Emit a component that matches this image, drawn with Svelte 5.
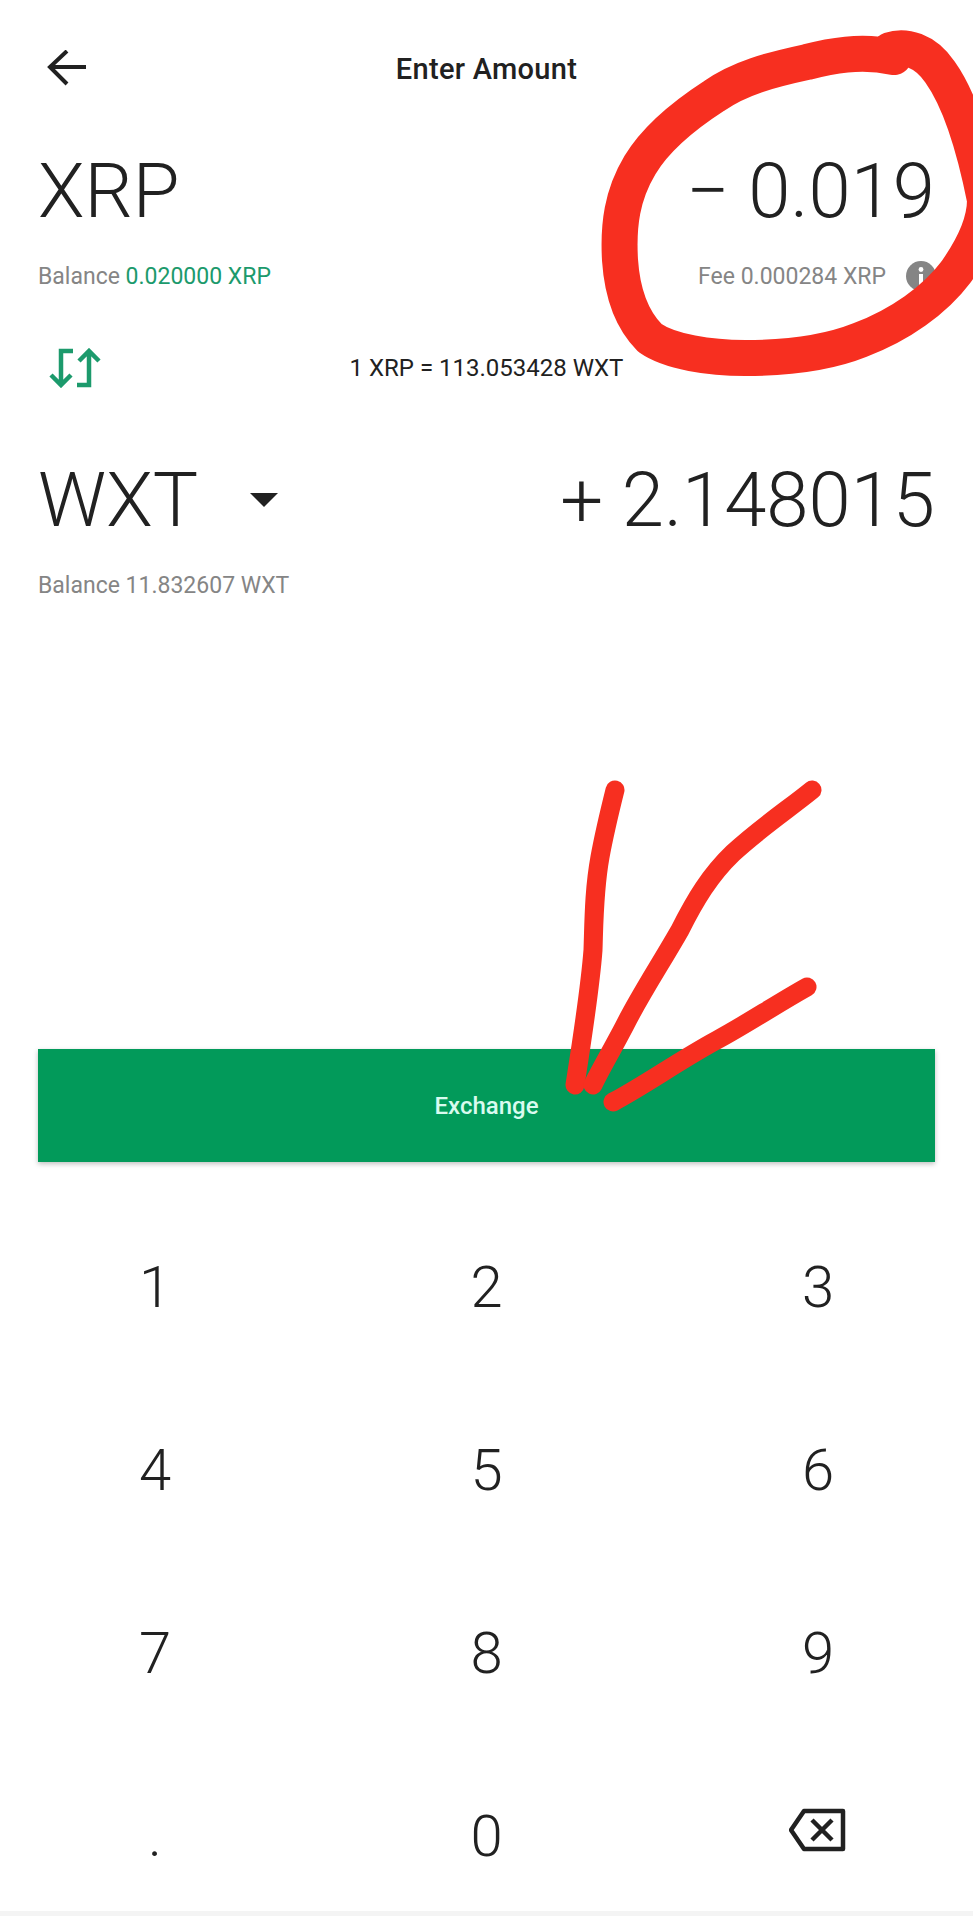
<script>
    let keys = ['1', '2', '3', '4', '5', '6', '7', '8', '9', '.', '0']
</script>

<main>
    <header>
        <svg class="back" viewBox="0 0 40 36" width="40" height="36">
            <path d="M39 17H3M20 1L3 17l17 17" fill="none" stroke="#212121" stroke-width="4"/>
        </svg>
        <h1>Enter Amount</h1>
    </header>

    <div class="amount-row">
        <span>XRP</span>
        <span>− 0.019</span>
    </div>
    <div class="sub-row">
        <span>Balance <em>0.020000 XRP</em></span>
        <span class="fee">
            Fee 0.000284 XRP
            <svg viewBox="0 0 30 30" width="30" height="30">
                <circle cx="15" cy="15" r="15" fill="#858585"/>
                <rect x="13" y="13" width="4" height="11" fill="#fff"/>
                <circle cx="15" cy="8.5" r="2.4" fill="#fff"/>
            </svg>
        </span>
    </div>

    <div class="rate-row">
        <svg class="swap" viewBox="0 0 52 40" width="52" height="40">
            <g fill="none" stroke="#1c9a6c" stroke-width="4.5">
                <path d="M24 3H12v34M2 27l10 10 10-10"/>
                <path d="M28 37h12V3M30 13L40 3l10 10"/>
            </g>
        </svg>
        <span class="rate">1 XRP = 113.053428 WXT</span>
    </div>

    <div class="amount-row second">
        <span class="coin">
            WXT
            <svg viewBox="0 0 28 14" width="28" height="14"><path d="M0 0h28L14 14z" fill="#212121"/></svg>
        </span>
        <span>+ 2.148015</span>
    </div>
    <div class="sub-row grey">
        <span>Balance 11.832607 WXT</span>
    </div>

    <button class="exchange">Exchange</button>

    <div class="keypad">
        {#each keys as key}
            <button class="key">{key}</button>
        {/each}
        <button class="key" aria-label="delete">
            <svg viewBox="0 0 58 44" width="58" height="44">
                <g fill="none" stroke="#212121" stroke-width="4.5" stroke-linejoin="round">
                    <path d="M15 3h39v38H15L2 22z"/>
                    <path d="M23 12l20 20M43 12L23 32"/>
                </g>
            </svg>
        </button>
    </div>
    <div class="bottom-line"></div>

    <!-- red marker scribbles drawn on top of the screenshot -->
    <svg class="scribble" viewBox="0 0 973 1920" width="973" height="1920">
        <g fill="none" stroke="#f72f20" stroke-linecap="round" stroke-linejoin="round">
            <path stroke-width="36" d="M894 57C860 50 830 56 807 62C770 70 740 78 714 96C680 118 655 140 640 165C622 195 618 225 620 260C622 290 630 318 650 338C670 352 710 358 745 358C790 358 830 352 860 340C900 325 935 300 956 272C975 245 985 220 985 200C975 150 960 100 940 72C925 50 905 45 890 50"/>
            <path stroke-width="19" d="M615 790C610 810 604 835 600 857C594 890 594 920 593 950C590 990 582 1040 575 1085"/>
            <path stroke-width="19" d="M812 790C790 808 760 828 733 853C710 875 695 900 680 930C660 965 640 995 625 1025C612 1050 600 1070 593 1085"/>
            <path stroke-width="19" d="M807 987C775 1005 745 1025 717 1040C680 1060 645 1085 613 1102"/>
        </g>
    </svg>
</main>

<style>
    :global(body) {
        margin: 0;
        background: #fff;
    }

    main {
        position: relative;
        width: 973px;
        height: 1920px;
        overflow: hidden;
        font-family: Roboto, "Open Sans", sans-serif;
        color: #212121;
    }

    header {
        height: 138px;
        display: flex;
        align-items: center;
        justify-content: center;
        position: relative;
    }

    .back {
        position: absolute;
        left: 47px;
        top: 50px;
    }

    h1 {
        margin: 0;
        font-size: 29px;
        font-weight: 500;
        letter-spacing: 0.3px;
    }

    .amount-row {
        height: 106px;
        padding: 0 38px;
        display: flex;
        align-items: center;
        justify-content: space-between;
        font-size: 76px;
        font-weight: 300;
    }

    .second {
        margin-top: 19px;
    }

    .coin {
        display: flex;
        align-items: center;
        gap: 52px;
    }

    .sub-row {
        height: 64px;
        padding: 0 38px;
        display: flex;
        align-items: center;
        justify-content: space-between;
        font-size: 23px;
        color: #858585;
    }

    em {
        font-style: normal;
        color: #1c9a6c;
    }

    .fee {
        display: flex;
        align-items: center;
        gap: 20px;
        margin-right: -1px;
    }

    .rate-row {
        height: 120px;
        position: relative;
        display: flex;
        align-items: center;
        justify-content: center;
    }

    .swap {
        position: absolute;
        left: 49px;
        top: 40px;
    }

    .rate {
        font-size: 24px;
    }

    .exchange {
        display: block;
        width: 897px;
        height: 113px;
        margin: 432px 38px 0;
        border: none;
        background: #029a5a;
        color: #d9fbef;
        font-family: inherit;
        font-size: 24px;
        font-weight: 500;
        box-shadow: 0 2px 5px rgba(0, 0, 0, 0.25);
    }

    .keypad {
        margin-top: 50px;
        padding: 0 105px;
        display: grid;
        grid-template-columns: repeat(3, 100px);
        justify-content: space-between;
        grid-auto-rows: 150px;
        row-gap: 33px;
    }

    .key {
        border: none;
        background: none;
        padding: 0;
        color: #212121;
        font-family: inherit;
        font-size: 58px;
        font-weight: 300;
    }

    .key svg {
        display: block;
        margin: -12px auto 0;
    }

    .bottom-line {
        height: 5px;
        background: #f4f4f4;
    }

    .scribble {
        position: absolute;
        left: 0;
        top: 0;
        pointer-events: none;
    }
</style>
